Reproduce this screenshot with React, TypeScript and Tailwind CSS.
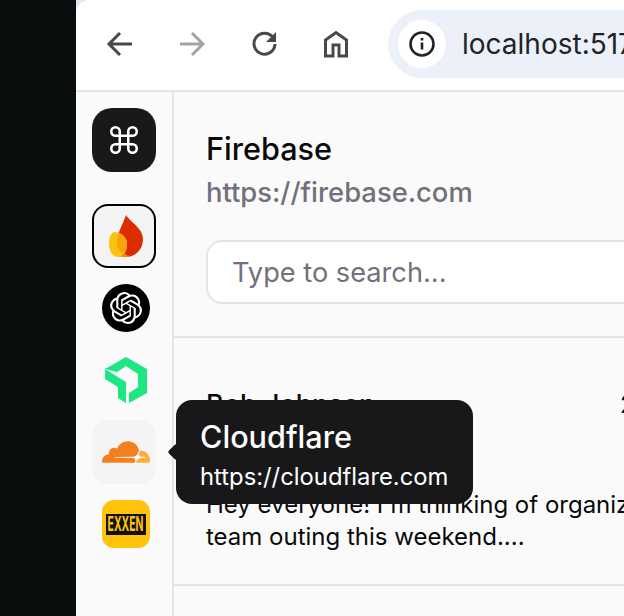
import { Command } from 'lucide-react'
import { SiOpenai } from 'react-icons/si'

const FirebaseIcon = () => (
  <svg width="60" height="60" viewBox="0 0 60 60">
    <path d="M32 9 C 36 16 49 22 49 33 C 49 44 41 51 32 51 C 26 51 22 46 22 38 C 22 30 29 18 32 9 Z" fill="#dd2c00" />
    <path d="M20 26 C 27 26 33 31 33 38 C 33 45 30 51 24 51 C 18 51 15 44 15 38 C 15 32 16 28 20 26 Z" fill="#fdc10e" />
    <path d="M24.500 26.800 C 29.500 28.500 33 33 33 38 C 33 42 32 45.500 30 48 C 25 46 23 42 23 37 C 23 33 23.500 30 24.500 26.800 Z" fill="#f8a30f" />
    <path d="M24 51 C 27 51 29 50 30.500 47.500 C 32 49 34 50 37 50.300 C 35 51 33.500 51 32 51 Z" fill="#f28c0e" />
  </svg>
)

const NewRelicIcon = () => (
  <svg width="44" height="48" viewBox="0 0 44 48">
    <path d="M22 1 L43 13 L43 37 L25 47 L25 37 L34 31 L34 18 L22 10 L13 16 L1 13 Z" fill="#1ce783" />
    <path d="M1 13 L22 26 L22 47 L14 42 L14 31 L1 23 Z" fill="#1ce783" />
  </svg>
)

const CloudflareIcon = () => (
  <svg width="48" height="48" viewBox="0 0 24 24" className="ml-[4px]">
    <path
      d="M16.5088 16.8447c.1475-.5068.0908-.9707-.1553-1.3154-.2246-.3164-.6045-.499-1.0615-.5205l-8.6592-.1123a.1559.1559 0 0 1-.1333-.0713c-.0283-.042-.0351-.0986-.021-.1553.0278-.084.1123-.1484.2036-.1562l8.7359-.1123c1.0351-.0489 2.1601-.8868 2.5537-1.9136l.499-1.3013c.0215-.0561.0293-.1128.0147-.168-.5625-2.5463-2.835-4.4453-5.5499-4.4453-2.5039 0-4.6284 1.6177-5.3876 3.8614-.4927-.3658-1.1187-.5625-1.794-.499-1.2026.119-2.1665 1.083-2.2861 2.2856-.0283.31-.0069.6128.0635.894C1.5683 13.171 0 14.7754 0 16.752c0 .1748.0142.3515.0352.5273.0141.083.0844.1475.1689.1475h15.9814c.0909 0 .1758-.0645.2032-.1553l.12-.4268z"
      fill="#f38020"
    />
    <path
      d="M19.2656 11.2813c-.0771 0-.1611 0-.2383.0112-.0566 0-.1054.0415-.127.0976l-.3378 1.1744c-.1475.5068-.0918.9707.1543 1.3164.2256.3164.6055.498 1.0625.5195l1.8437.1133c.0557 0 .1055.0263.1329.0703.0283.043.0351.1074.0214.1562-.0283.084-.1132.1485-.204.1553l-1.921.1123c-1.041.0488-2.1582.8867-2.5527 1.914l-.1406.3585c-.0283.0713.0215.1416.0986.1416h6.5977c.0771 0 .1474-.0489.169-.126.1122-.4082.1757-.837.1757-1.2803 0-2.6025-2.125-4.727-4.7344-4.727"
      fill="#faae40"
    />
  </svg>
)

const ToolbarIcon = ({ children, muted }: { children: React.ReactNode; muted?: boolean }) => (
  <svg
    width="32"
    height="32"
    viewBox="0 0 32 32"
    fill="none"
    stroke={muted ? '#a3a3a3' : '#484848'}
    strokeWidth="3"
    className="shrink-0"
  >
    {children}
  </svg>
)

export default function App() {
  return (
    <div className="relative flex h-[616px] w-[624px] overflow-hidden bg-[#0a0d0e] font-['Inter',sans-serif]">
      <div className="ml-[76px] h-full w-[800px] shrink-0 bg-[#dfe7f6]">
        <div className="flex h-full flex-col overflow-hidden rounded-tl-[14px] bg-white">
          <div className="flex h-[92px] shrink-0 items-center border-b-2 border-[#e4e4e7] bg-white pb-[2px] pl-[28px]">
            <div className="flex items-center gap-[40px]">
              <ToolbarIcon>
                <path d="M28 16H7M16 5L5 16l11 11" />
              </ToolbarIcon>
              <ToolbarIcon muted>
                <path d="M4 16h22M16 5l11 11-11 11" />
              </ToolbarIcon>
              <ToolbarIcon>
                <path d="M25 9.500a10.500 10.500 0 1 0 2 6.500" />
                <path d="M28 4v10h-10z" fill="#484848" stroke="none" />
              </ToolbarIcon>
              <ToolbarIcon>
                <path d="M5.500 28V12L16 4.500 26.500 12V28H19V17h-6v11z" />
              </ToolbarIcon>
            </div>
            <div className="ml-[36px] flex h-[68px] w-[400px] shrink-0 items-center rounded-full bg-[#ebf0f9] pl-[10px]">
              <div className="flex size-[48px] items-center justify-center rounded-full bg-white">
                <svg width="28" height="28" viewBox="0 0 28 28" fill="none" stroke="#1f2328" strokeWidth="2.600">
                  <circle cx="14" cy="14" r="11.500" />
                  <path d="M14 12.500v7M14 8v2.600" />
                </svg>
              </div>
              <span className="ml-[16px] text-[28px] text-[#1f2328]">localhost:5173</span>
            </div>
          </div>
          <div className="flex min-h-0 flex-1 bg-[#fafafa]">
            <div className="flex w-[98px] shrink-0 flex-col items-center border-r-2 border-[#e4e4e7] pt-[16px]">
              <div className="flex size-[64px] items-center justify-center rounded-[20px] bg-[#18181b]">
                <Command className="size-[34px] text-white" strokeWidth={1.8} />
              </div>
              <div className="mt-[32px] flex size-[64px] items-center justify-center rounded-[16px] border-2 border-black bg-[#f4f4f5]">
                <FirebaseIcon />
              </div>
              <div className="mt-[16px] ml-[4px] flex size-[48px] items-center justify-center rounded-full bg-black">
                <SiOpenai className="size-[32px] text-white" />
              </div>
              <div className="mt-[24px] ml-[4px] flex h-[48px] items-center justify-center">
                <NewRelicIcon />
              </div>
              <div className="mt-[16px] flex size-[64px] items-center justify-center rounded-[16px] bg-[#f4f4f5]">
                <CloudflareIcon />
              </div>
              <div className="mt-[16px] ml-[4px] flex size-[48px] items-center justify-center rounded-[12px] bg-[#ffc30b]">
                <div className="flex h-[21px] w-[40px] items-center justify-center bg-[#111] text-[#ffc30b]">
                  <span className="shrink-0 scale-x-[0.52] text-[20px] leading-none font-bold">EXXEN</span>
                </div>
              </div>
            </div>
            <div className="flex min-w-0 flex-1 flex-col">
              <div className="flex h-[246px] shrink-0 flex-col border-b-2 border-[#e4e4e7] px-[32px] pt-[37px]">
                <div className="text-[30.600px] leading-[40px] font-[550] text-[#09090b]">Firebase</div>
                <div className="mt-[3px] text-[27.400px] leading-[40px] font-medium text-[#71717a]">
                  https://firebase.com
                </div>
                <div className="mt-[28px] flex h-[64px] items-center rounded-[16px] border-2 border-[#e4e4e7] bg-white px-[24px] pt-[2px] text-[27.200px] text-[#71717a]">
                  <span>Type to search...</span>
                </div>
              </div>
              <div className="flex h-[248px] shrink-0 flex-col border-b-2 border-[#e4e4e7] px-[32px] pt-[47px]">
                <div className="flex text-[27px] leading-[40px] text-[#09090b]">
                  <span className="w-[414px] font-medium">Bob Johnson</span>
                  <span className="text-[24px]">2 days ago</span>
                </div>
                <div className="mt-[64px] w-[520px] text-[24px] leading-[32px] text-[#09090b]">
                  Hey everyone! I'm thinking of organizing a team outing this weekend....
                </div>
              </div>
            </div>
          </div>
        </div>
      </div>

      {/* hover card on the cloudflare item */}
      <div className="absolute top-[400px] left-[176px] flex h-[104px] w-[297px] flex-col rounded-[16px] bg-[#18181b] pt-[17px] pl-[24px] text-white">
        <div className="absolute top-[46px] left-[-6px] size-[12px] rotate-45 rounded-[2px] bg-[#18181b]" />
        <div className="text-[30.600px] leading-[40px] font-[550]">Cloudflare</div>
        <div className="mt-[4px] text-[23.800px] leading-[32px]">https://cloudflare.com</div>
      </div>
    </div>
  )
}
